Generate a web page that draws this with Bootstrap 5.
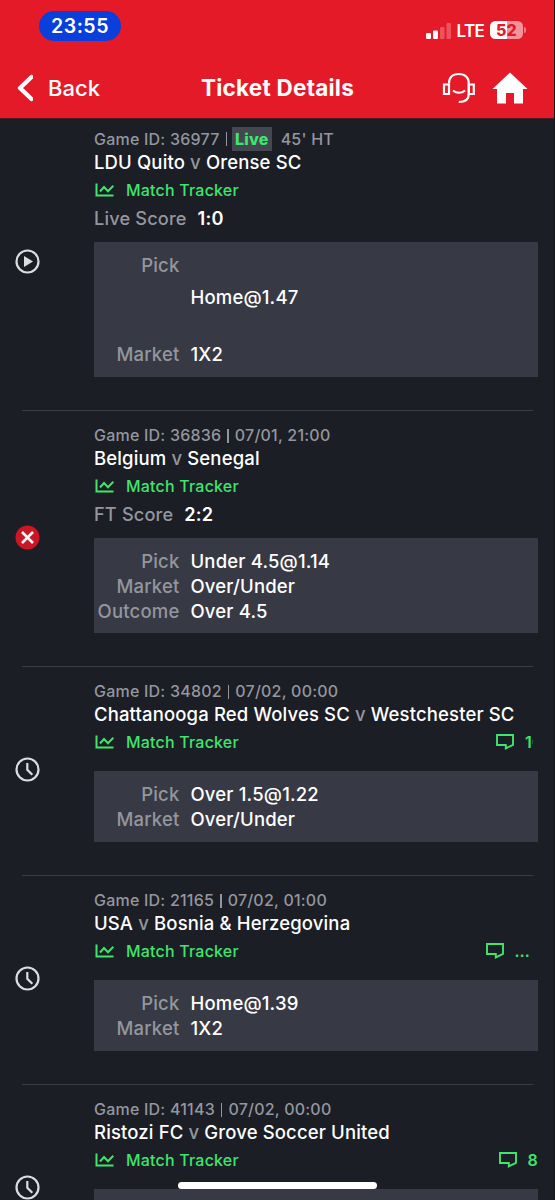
<!DOCTYPE html>
<html lang="en">
<head>
<meta charset="utf-8">
<meta name="viewport" content="width=device-width, initial-scale=1">
<title>Ticket Details</title>
<link href="https://cdn.jsdelivr.net/npm/bootstrap@5.3.0/dist/css/bootstrap.min.css" rel="stylesheet">
<style>
:root{--red:#e51a29;--bg:#1b1e25;--panel:#373a44;--muted:#94969e;--green:#3fe56c}
html,body{height:1200px;overflow:hidden}
body{background:var(--bg);color:#fff;font-family:Inter,"Liberation Sans",sans-serif;font-weight:500;border-right:1px solid #131519}
svg{display:block;flex:none}
main{height:1082px;margin-top:-1px;overflow:hidden}
.top-area{background:var(--red);height:119px;border-bottom:1px solid #4a1c25;margin-right:-1px;border-right:1px solid #b81823}
.status-row{height:52px;padding:0 28px 0 39px}
.clock{width:82px;height:30px;margin-top:11px;background:#0a3fdb;font-size:19.5px;font-weight:600;line-height:30px;letter-spacing:.5px}
.signal-set{margin-top:20px;height:20px}
.lte{font-size:17px;font-weight:600;line-height:20px;letter-spacing:-.7px;margin:2px 6px 0 5px}
.batt{width:33px;height:18px;border-radius:5.5px;background:linear-gradient(90deg,#fff 50%,#f3949b 50%);color:var(--red);font-size:16px;font-weight:800;line-height:18px;letter-spacing:.3px}
.batt-cap{width:2px;height:6px;border-radius:0 2px 2px 0;background:#f07a83;margin-left:1px}
.title-row{height:65px;display:grid;grid-template-columns:1fr auto 1fr;padding:7px 26px 0 17px}
.back-link{font-size:22px;line-height:30px;gap:15px;letter-spacing:.05px}
.page-title{font-size:22.5px;font-weight:700;line-height:30px;letter-spacing:.24px;margin-left:10px}
.bet{display:grid;grid-template-columns:79px 444px;padding:0 16px 0 15px;align-items:center;position:relative;height:256px}
.bet + .bet::before{content:"";position:absolute;left:22px;right:21px;top:0;height:1px;background:#3a3d45}
.bet-live{height:292px}
.bet-live .bet-body{padding-top:9px}
.bet-short{height:209px}
.bet-body{align-self:start;padding-top:13px}
.state{margin:-2px 0 0 -.4px}
.bet-live .state{margin-top:-5px}
.id-line{font-size:16px;line-height:24px;height:24px;color:var(--muted);letter-spacing:.22px;white-space:pre}
.sep{display:inline-block;width:1.5px;height:14px;background:var(--muted);margin:0 6px 0 6px;vertical-align:-2px}
.live-tag{color:var(--green);background:#44474f;font-weight:800;padding:0 3px;height:24px;margin:0 9px 0 -1px}
.teams{font-size:18.5px;line-height:22px;height:23px;white-space:pre;letter-spacing:.14px}
.teams i{font-style:normal;color:var(--muted)}
.track{height:31px;margin-bottom:2px;color:var(--green);font-size:16px;line-height:24px;letter-spacing:.2px}
.track .chart-ico{margin-right:12px}
.chat-ico{margin-right:11px}
.chat-link{font-weight:600}
.score{font-size:18.2px;line-height:22px;height:24px;color:var(--muted);letter-spacing:.15px}
.score b{font-weight:600;color:#fff;margin-left:6px}
.slip{background:var(--panel);margin-top:11px;padding:11px 0 9px;font-size:18.5px;line-height:25px}
.slip.flush{margin-top:14px;padding-bottom:10px}
.slip dl{display:grid;grid-template-columns:85.5px 1fr;column-gap:11px;margin:0}
.slip dt{text-align:right;font-weight:500;color:var(--muted);letter-spacing:.2px}
.slip dd{margin:0;letter-spacing:.17px}
.slip-live{height:135px}
.home-bar{position:absolute;left:178px;top:1182px;width:199px;height:7px;border-radius:4px;background:#fff}
</style>
</head>
<body>
<svg class="d-none">
<symbol id="chart" viewBox="0 0 20 16"><path d="M2.500 1.500v12H19.500" fill="none" stroke="currentColor" stroke-width="2"/><path d="M6 9.500l4-4.500 4 4.200 5.300-5.400" fill="none" stroke="currentColor" stroke-width="2"/></symbol>
<symbol id="chat" viewBox="0 0 18 16"><path d="M1 1h16v9.800L9.800 14.400V11H1z" fill="none" stroke="currentColor" stroke-width="1.900"/></symbol>
<symbol id="clock" viewBox="0 0 25 25"><circle cx="12.500" cy="12.500" r="11" fill="none" stroke="#dcdddf" stroke-width="2.200"/><path d="M12.300 6v6.800l5 5" fill="none" stroke="#dcdddf" stroke-width="2.200"/></symbol>
</svg>
<header class="top-area">
<div class="status-row d-flex justify-content-between align-items-start">
<div class="clock rounded-pill text-center">23:55</div>
<div class="signal-set d-flex align-items-center">
<svg width="26" height="18" viewBox="0 0 26 18"><g fill="#fff"><rect x="0" y="12" width="5" height="6" rx="1.300"/><rect x="7" y="9.500" width="5" height="8.500" rx="1.300"/><g opacity=".25"><rect x="14" y="6" width="4.500" height="12" rx="1.300"/><rect x="20.500" y="2" width="4.500" height="16" rx="1.300"/></g></g></svg>
<span class="lte">LTE</span><span class="batt text-center">52</span><span class="batt-cap"></span>
</div>
</div>
<div class="title-row align-items-center">
<div class="back-link d-flex align-items-center"><svg width="16" height="28" viewBox="0 0 16 28"><path d="M14.500 3L3 14l11.500 11" fill="none" stroke="#fff" stroke-width="4.300" stroke-linecap="round" stroke-linejoin="round"/></svg>Back</div>
<div class="page-title">Ticket Details</div>
<div class="d-flex justify-content-end align-items-center gap-3">
<svg width="34" height="32" viewBox="0 0 34 32" fill="none" stroke="#fff" stroke-width="2.200"><path d="M7 11.500C7 5.500 10.500 2 16.800 2S26.800 5.500 26.800 11.500V22c0 5.500-3.500 8-10 8"/><path d="M7 12.500H2v9.500h5zM26.800 12.500h5v9.500h-5zM11 18.500c3.500 3 8.500 3 12 0"/></svg>
<svg width="36" height="32" viewBox="0 0 36 32"><path d="M18 .5L35.500 17H31v14.500h-9V21h-8v10.500H5V17H.5z" fill="#fff"/></svg>
</div>
</div>
</header>
<main>
<section class="bet bet-live">
<div class="state"><svg width="25" height="25" viewBox="0 0 25 25"><circle cx="12.500" cy="12.500" r="11" fill="none" stroke="#dcdddf" stroke-width="2.200"/><path d="M9 7l9 5.500L9 18z" fill="#dcdddf"/></svg></div>
<div class="bet-body">
<div class="id-line d-flex align-items-center">Game ID: 36977<span class="sep"></span><span class="live-tag">Live</span>45' HT</div>
<div class="teams">LDU Quito <i>v</i> Orense SC</div>
<div class="track d-flex align-items-center"><svg class="chart-ico" width="20" height="16"><use href="#chart"/></svg>Match Tracker</div>
<div class="score">Live Score <b>1:0</b></div>
<div class="slip slip-live"><dl><dt>Pick</dt><dd class="pt-4 pb-4 mt-2 mb-2">Home@1.47</dd><dt>Market</dt><dd>1X2</dd></dl></div>
</div>
</section>
<section class="bet">
<div class="state"><svg width="25" height="25" viewBox="0 0 25 25"><circle cx="12.500" cy="12.500" r="12" fill="#ca1726"/><path d="M7 7l11 11M18 7L7 18" stroke="#fff" stroke-width="2.600"/></svg></div>
<div class="bet-body">
<div class="id-line">Game ID: 36836<span class="sep"></span>07/01, 21:00</div>
<div class="teams">Belgium <i>v</i> Senegal</div>
<div class="track d-flex align-items-center"><svg class="chart-ico" width="20" height="16"><use href="#chart"/></svg>Match Tracker</div>
<div class="score">FT Score <b>2:2</b></div>
<div class="slip"><dl><dt>Pick</dt><dd>Under 4.5@1.14</dd><dt>Market</dt><dd>Over/Under</dd><dt>Outcome</dt><dd>Over 4.5</dd></dl></div>
</div>
</section>
<section class="bet bet-short">
<div class="state"><svg width="25" height="25"><use href="#clock"/></svg></div>
<div class="bet-body">
<div class="id-line">Game ID: 34802<span class="sep"></span>07/02, 00:00</div>
<div class="teams">Chattanooga Red Wolves SC <i>v</i> Westchester SC</div>
<div class="track d-flex align-items-center"><svg class="chart-ico" width="20" height="16"><use href="#chart"/></svg>Match Tracker<span class="chat-link ms-auto me-1 d-flex align-items-center"><svg class="chat-ico" width="18" height="16"><use href="#chat"/></svg><span class="overflow-hidden me-1" style="width:8px;margin-right:1px!important">16</span></span></div>
<div class="slip flush"><dl><dt>Pick</dt><dd>Over 1.5@1.22</dd><dt>Market</dt><dd>Over/Under</dd></dl></div>
</div>
</section>
<section class="bet bet-short">
<div class="state"><svg width="25" height="25"><use href="#clock"/></svg></div>
<div class="bet-body">
<div class="id-line">Game ID: 21165<span class="sep"></span>07/02, 01:00</div>
<div class="teams">USA <i>v</i> Bosnia &amp; Herzegovina</div>
<div class="track d-flex align-items-center"><svg class="chart-ico" width="20" height="16"><use href="#chart"/></svg>Match Tracker<span class="chat-link ms-auto me-2 d-flex align-items-center"><svg class="chat-ico" width="18" height="16"><use href="#chat"/></svg>…</span></div>
<div class="slip flush"><dl><dt>Pick</dt><dd>Home@1.39</dd><dt>Market</dt><dd>1X2</dd></dl></div>
</div>
</section>
<section class="bet bet-short">
<div class="state"><svg width="25" height="25"><use href="#clock"/></svg></div>
<div class="bet-body">
<div class="id-line">Game ID: 41143<span class="sep"></span>07/02, 00:00</div>
<div class="teams">Ristozi FC <i>v</i> Grove Soccer United</div>
<div class="track d-flex align-items-center"><svg class="chart-ico" width="20" height="16"><use href="#chart"/></svg>Match Tracker<span class="chat-link ms-auto d-flex align-items-center"><svg class="chat-ico" width="18" height="16"><use href="#chat"/></svg>8</span></div>
<div class="slip flush"><dl><dt>&nbsp;</dt><dd></dd></dl></div>
</div>
</section>
</main>
<div class="home-bar"></div>
<script src="https://cdn.jsdelivr.net/npm/bootstrap@5.3.0/dist/js/bootstrap.bundle.min.js"></script>
</body>
</html>
